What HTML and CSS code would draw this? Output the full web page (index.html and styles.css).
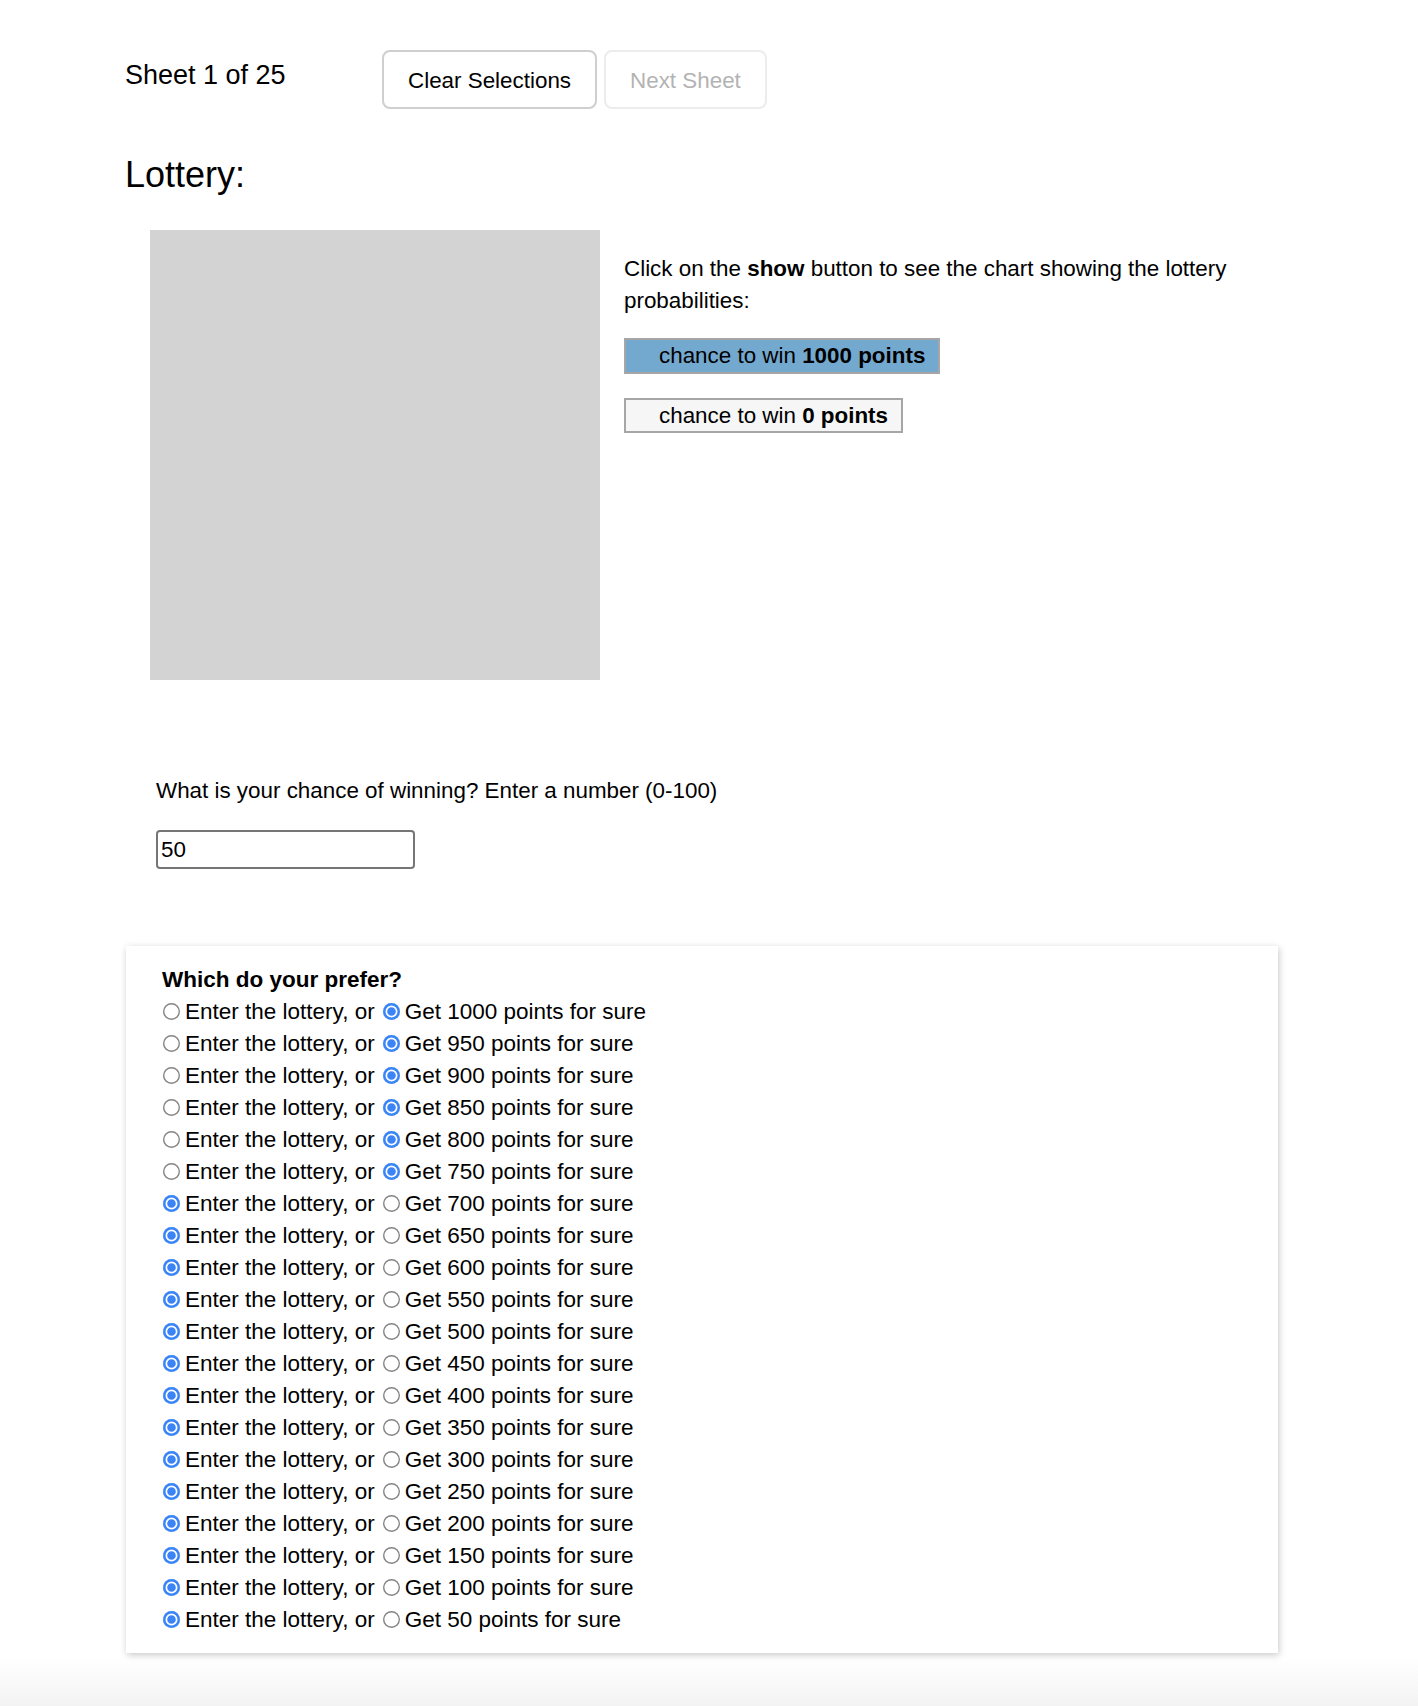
FILE: index.html
```html
<!DOCTYPE html>
<html lang="en">
<head>
<meta charset="utf-8">
<title>Lottery</title>
<link rel="stylesheet" href="styles.css">
</head>
<body>
<div class="page">
  <div class="topbar">
    <div class="sheet-label">Sheet 1 of 25</div>
    <button class="btn">Clear Selections</button>
    <button class="btn btn-disabled">Next Sheet</button>
  </div>

  <h2 class="title">Lottery:</h2>

  <div class="lottery">
    <div class="chart"></div>
    <div class="info">
      <p class="info-text">Click on the <b>show</b> button to see the chart showing the lottery probabilities:</p>
      <div class="legend legend-win">chance to win <b>1000 points</b></div>
      <div class="legend legend-lose">chance to win <b>0 points</b></div>
    </div>
  </div>

  <div class="question">
    <p class="question-text">What is your chance of winning? Enter a number (0-100)</p>
    <input class="answer" type="text" value="50">
  </div>

  <div class="card">
    <div class="card-title">Which do your prefer?</div>
    <div class="row"><input type="radio" class="radio r1" name="q1"><span>Enter the lottery, or</span><input type="radio" class="radio r2" name="q1" checked><span>Get 1000 points for sure</span></div>
    <div class="row"><input type="radio" class="radio r1" name="q2"><span>Enter the lottery, or</span><input type="radio" class="radio r2" name="q2" checked><span>Get 950 points for sure</span></div>
    <div class="row"><input type="radio" class="radio r1" name="q3"><span>Enter the lottery, or</span><input type="radio" class="radio r2" name="q3" checked><span>Get 900 points for sure</span></div>
    <div class="row"><input type="radio" class="radio r1" name="q4"><span>Enter the lottery, or</span><input type="radio" class="radio r2" name="q4" checked><span>Get 850 points for sure</span></div>
    <div class="row"><input type="radio" class="radio r1" name="q5"><span>Enter the lottery, or</span><input type="radio" class="radio r2" name="q5" checked><span>Get 800 points for sure</span></div>
    <div class="row"><input type="radio" class="radio r1" name="q6"><span>Enter the lottery, or</span><input type="radio" class="radio r2" name="q6" checked><span>Get 750 points for sure</span></div>
    <div class="row"><input type="radio" class="radio r1" name="q7" checked><span>Enter the lottery, or</span><input type="radio" class="radio r2" name="q7"><span>Get 700 points for sure</span></div>
    <div class="row"><input type="radio" class="radio r1" name="q8" checked><span>Enter the lottery, or</span><input type="radio" class="radio r2" name="q8"><span>Get 650 points for sure</span></div>
    <div class="row"><input type="radio" class="radio r1" name="q9" checked><span>Enter the lottery, or</span><input type="radio" class="radio r2" name="q9"><span>Get 600 points for sure</span></div>
    <div class="row"><input type="radio" class="radio r1" name="q10" checked><span>Enter the lottery, or</span><input type="radio" class="radio r2" name="q10"><span>Get 550 points for sure</span></div>
    <div class="row"><input type="radio" class="radio r1" name="q11" checked><span>Enter the lottery, or</span><input type="radio" class="radio r2" name="q11"><span>Get 500 points for sure</span></div>
    <div class="row"><input type="radio" class="radio r1" name="q12" checked><span>Enter the lottery, or</span><input type="radio" class="radio r2" name="q12"><span>Get 450 points for sure</span></div>
    <div class="row"><input type="radio" class="radio r1" name="q13" checked><span>Enter the lottery, or</span><input type="radio" class="radio r2" name="q13"><span>Get 400 points for sure</span></div>
    <div class="row"><input type="radio" class="radio r1" name="q14" checked><span>Enter the lottery, or</span><input type="radio" class="radio r2" name="q14"><span>Get 350 points for sure</span></div>
    <div class="row"><input type="radio" class="radio r1" name="q15" checked><span>Enter the lottery, or</span><input type="radio" class="radio r2" name="q15"><span>Get 300 points for sure</span></div>
    <div class="row"><input type="radio" class="radio r1" name="q16" checked><span>Enter the lottery, or</span><input type="radio" class="radio r2" name="q16"><span>Get 250 points for sure</span></div>
    <div class="row"><input type="radio" class="radio r1" name="q17" checked><span>Enter the lottery, or</span><input type="radio" class="radio r2" name="q17"><span>Get 200 points for sure</span></div>
    <div class="row"><input type="radio" class="radio r1" name="q18" checked><span>Enter the lottery, or</span><input type="radio" class="radio r2" name="q18"><span>Get 150 points for sure</span></div>
    <div class="row"><input type="radio" class="radio r1" name="q19" checked><span>Enter the lottery, or</span><input type="radio" class="radio r2" name="q19"><span>Get 100 points for sure</span></div>
    <div class="row"><input type="radio" class="radio r1" name="q20" checked><span>Enter the lottery, or</span><input type="radio" class="radio r2" name="q20"><span>Get 50 points for sure</span></div>
  </div>
</div>
</body>
</html>
```

FILE: styles.css
```css
html, body {
  margin: 0;
  padding: 0;
}

body {
  min-height: 100vh;
  font-family: "Liberation Sans", Arial, Helvetica, sans-serif;
  font-size: 22.4px;
  color: #000;
  background: linear-gradient(to bottom, #ffffff calc(100% - 48px), #f3f3f3 100%);
}

.page {
  padding: 50px 0 0 125px;
}

/* top bar */
.topbar {
  display: flex;
  align-items: flex-start;
}

.sheet-label {
  flex: 0 0 257px;
  font-size: 27px;
  line-height: 31px;
  margin-top: 10px;
}

.btn {
  height: 59px;
  padding: 2px 24px 0;
  font-family: inherit;
  font-size: 22.4px;
  color: #000;
  background: #fff;
  border: 2px solid #cfcfcf;
  border-radius: 8px;
}

.btn-disabled {
  margin-left: 7px;
  color: #b3b3b3;
  border-color: #ececec;
}

/* title */
.title {
  margin: 45px 0 0 0;
  font-size: 36px;
  line-height: 42px;
  font-weight: normal;
}

/* lottery section */
.lottery {
  display: flex;
  margin: 34px 0 0 25px;
}

.chart {
  flex: 0 0 450px;
  height: 450px;
  background: #d3d3d3;
}

.info {
  width: 654px;
  margin-left: 24px;
  padding-top: 23px;
  display: flex;
  flex-direction: column;
  align-items: flex-start;
}

.info-text {
  margin: 0;
  line-height: 31.5px;
}

.legend {
  line-height: 31.5px;
  padding: 0 13px 0 33px;
  border: 2px solid #a6a6a6;
}

.legend-win {
  margin-top: 22px;
  background: #74a9cf;
}

.legend-lose {
  margin-top: 24px;
  background: #f6f6f6;
}

/* question */
.question {
  margin: 95px 0 0 31px;
}

.question-text {
  margin: 0;
  line-height: 31.5px;
}

.answer {
  display: block;
  box-sizing: border-box;
  margin-top: 23px;
  width: 259px;
  height: 39px;
  padding: 2px 3px 0;
  font-family: inherit;
  font-size: 22.4px;
  color: #000;
  border: 2px solid #767676;
  border-radius: 4px;
  outline: none;
}

/* card */
.card {
  box-sizing: border-box;
  width: 1152px;
  margin: 77px 0 0 1px;
  padding: 18px 36px 17px;
  background: #fff;
  box-shadow: 1px 2px 7px rgba(0, 0, 0, 0.22);
  font-size: 22.5px;
}

.card-title {
  font-weight: bold;
  line-height: 32px;
}

.row {
  display: flex;
  align-items: center;
  height: 32px;
  line-height: 32px;
}

.radio {
  -webkit-appearance: none;
  appearance: none;
  flex: 0 0 17px;
  width: 17px;
  height: 17px;
  margin: 0;
  border-radius: 50%;
  background: #fff;
  box-shadow: inset 0 0 0 1.4px #858585;
}

.radio:checked {
  background: #3a84f8;
  box-shadow: inset 0 0 0 2.5px #3a84f8, inset 0 0 0 4.2px #fff;
}

.r1 {
  margin: 0 5px 0 1px;
}

.r2 {
  margin: 0 5px 0 8px;
}
```
